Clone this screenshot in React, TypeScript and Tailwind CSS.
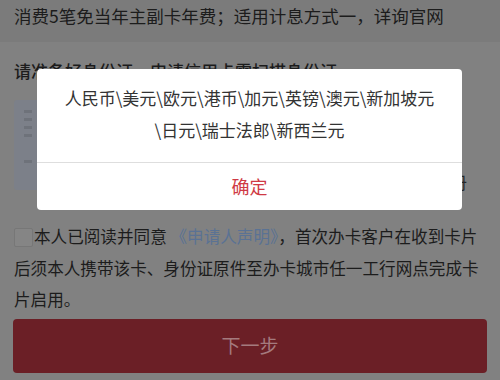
const font = { fontFamily: '"Noto Sans CJK SC", "Noto Sans", sans-serif' };

export default function App() {
  return (
    <div className="relative w-[500px] h-[380px] overflow-hidden bg-[#818181] text-[#1c1c1c]" style={font}>
      {/* dimmed page */}
      <div className="h-[42px] bg-[#7b7b7b] px-[14px] pt-[3px] text-[17.5px] leading-[26px]">
        消费5笔免当年主副卡年费；适用计息方式一，详询官网
      </div>
      <div className="px-[14px] pt-[16px] text-[17px] leading-[26px] font-medium">
        请准备好身份证，申请信用卡需扫描身份证
      </div>
      <div className="flex items-end justify-between pl-[14px] pr-[33px] pt-[16px]">
        <div className="w-[200px] h-[90px] rounded-[3px] bg-[#7c8089] pl-[10px] pt-[10px] flex flex-col gap-[5px]">
          <div className="w-[8px] h-[3px] bg-[#6e727a]" />
          <div className="w-[8px] h-[3px] bg-[#6e727a]" />
          <div className="w-[8px] h-[3px] bg-[#6e727a]" />
          <div className="w-[8px] h-[3px] bg-[#6e727a]" />
          <div className="w-[8px] h-[3px] mt-[18px] bg-[#6e727a]" />
        </div>
        <div className="text-[17px] leading-[26px] mb-[-5px] text-[#262626]">相册</div>
      </div>
      <div className="px-[14px] pt-[31px] text-[16.6px] leading-[31.5px]">
        <span className="inline-block align-[-4px] w-[19px] h-[19px] mr-[1px] rounded-[2px] border border-[#777] bg-[#858585]" />
        本人已阅读并同意 <span className="text-[#5a7294]">《申请人声明》</span>，首次办卡客户在收到卡片后须本人携带该卡、身份证原件至办卡城市任一工行网点完成卡片启用。
      </div>
      <div className="px-[13px] pt-[3px]">
        <div className="h-[54px] rounded-[4px] bg-[#6b1f26] flex items-center justify-center text-[19px] text-[#a47a7e]">
          下一步
        </div>
      </div>

      {/* alert dialog */}
      <div className="absolute left-[37px] top-[69px] w-[425px] rounded-[4px] bg-white">
        <div className="pt-[13px] pb-[16px] text-center text-[17px] leading-[32px] text-[#333]">
          人民币\美元\欧元\港币\加元\英镑\澳元\新加坡元
          <br />
          \日元\瑞士法郎\新西兰元
        </div>
        <div className="h-[48px] border-t border-[#dedede] flex items-center justify-center text-[18px] text-[#cf3a45]">
          确定
        </div>
      </div>
    </div>
  );
}
